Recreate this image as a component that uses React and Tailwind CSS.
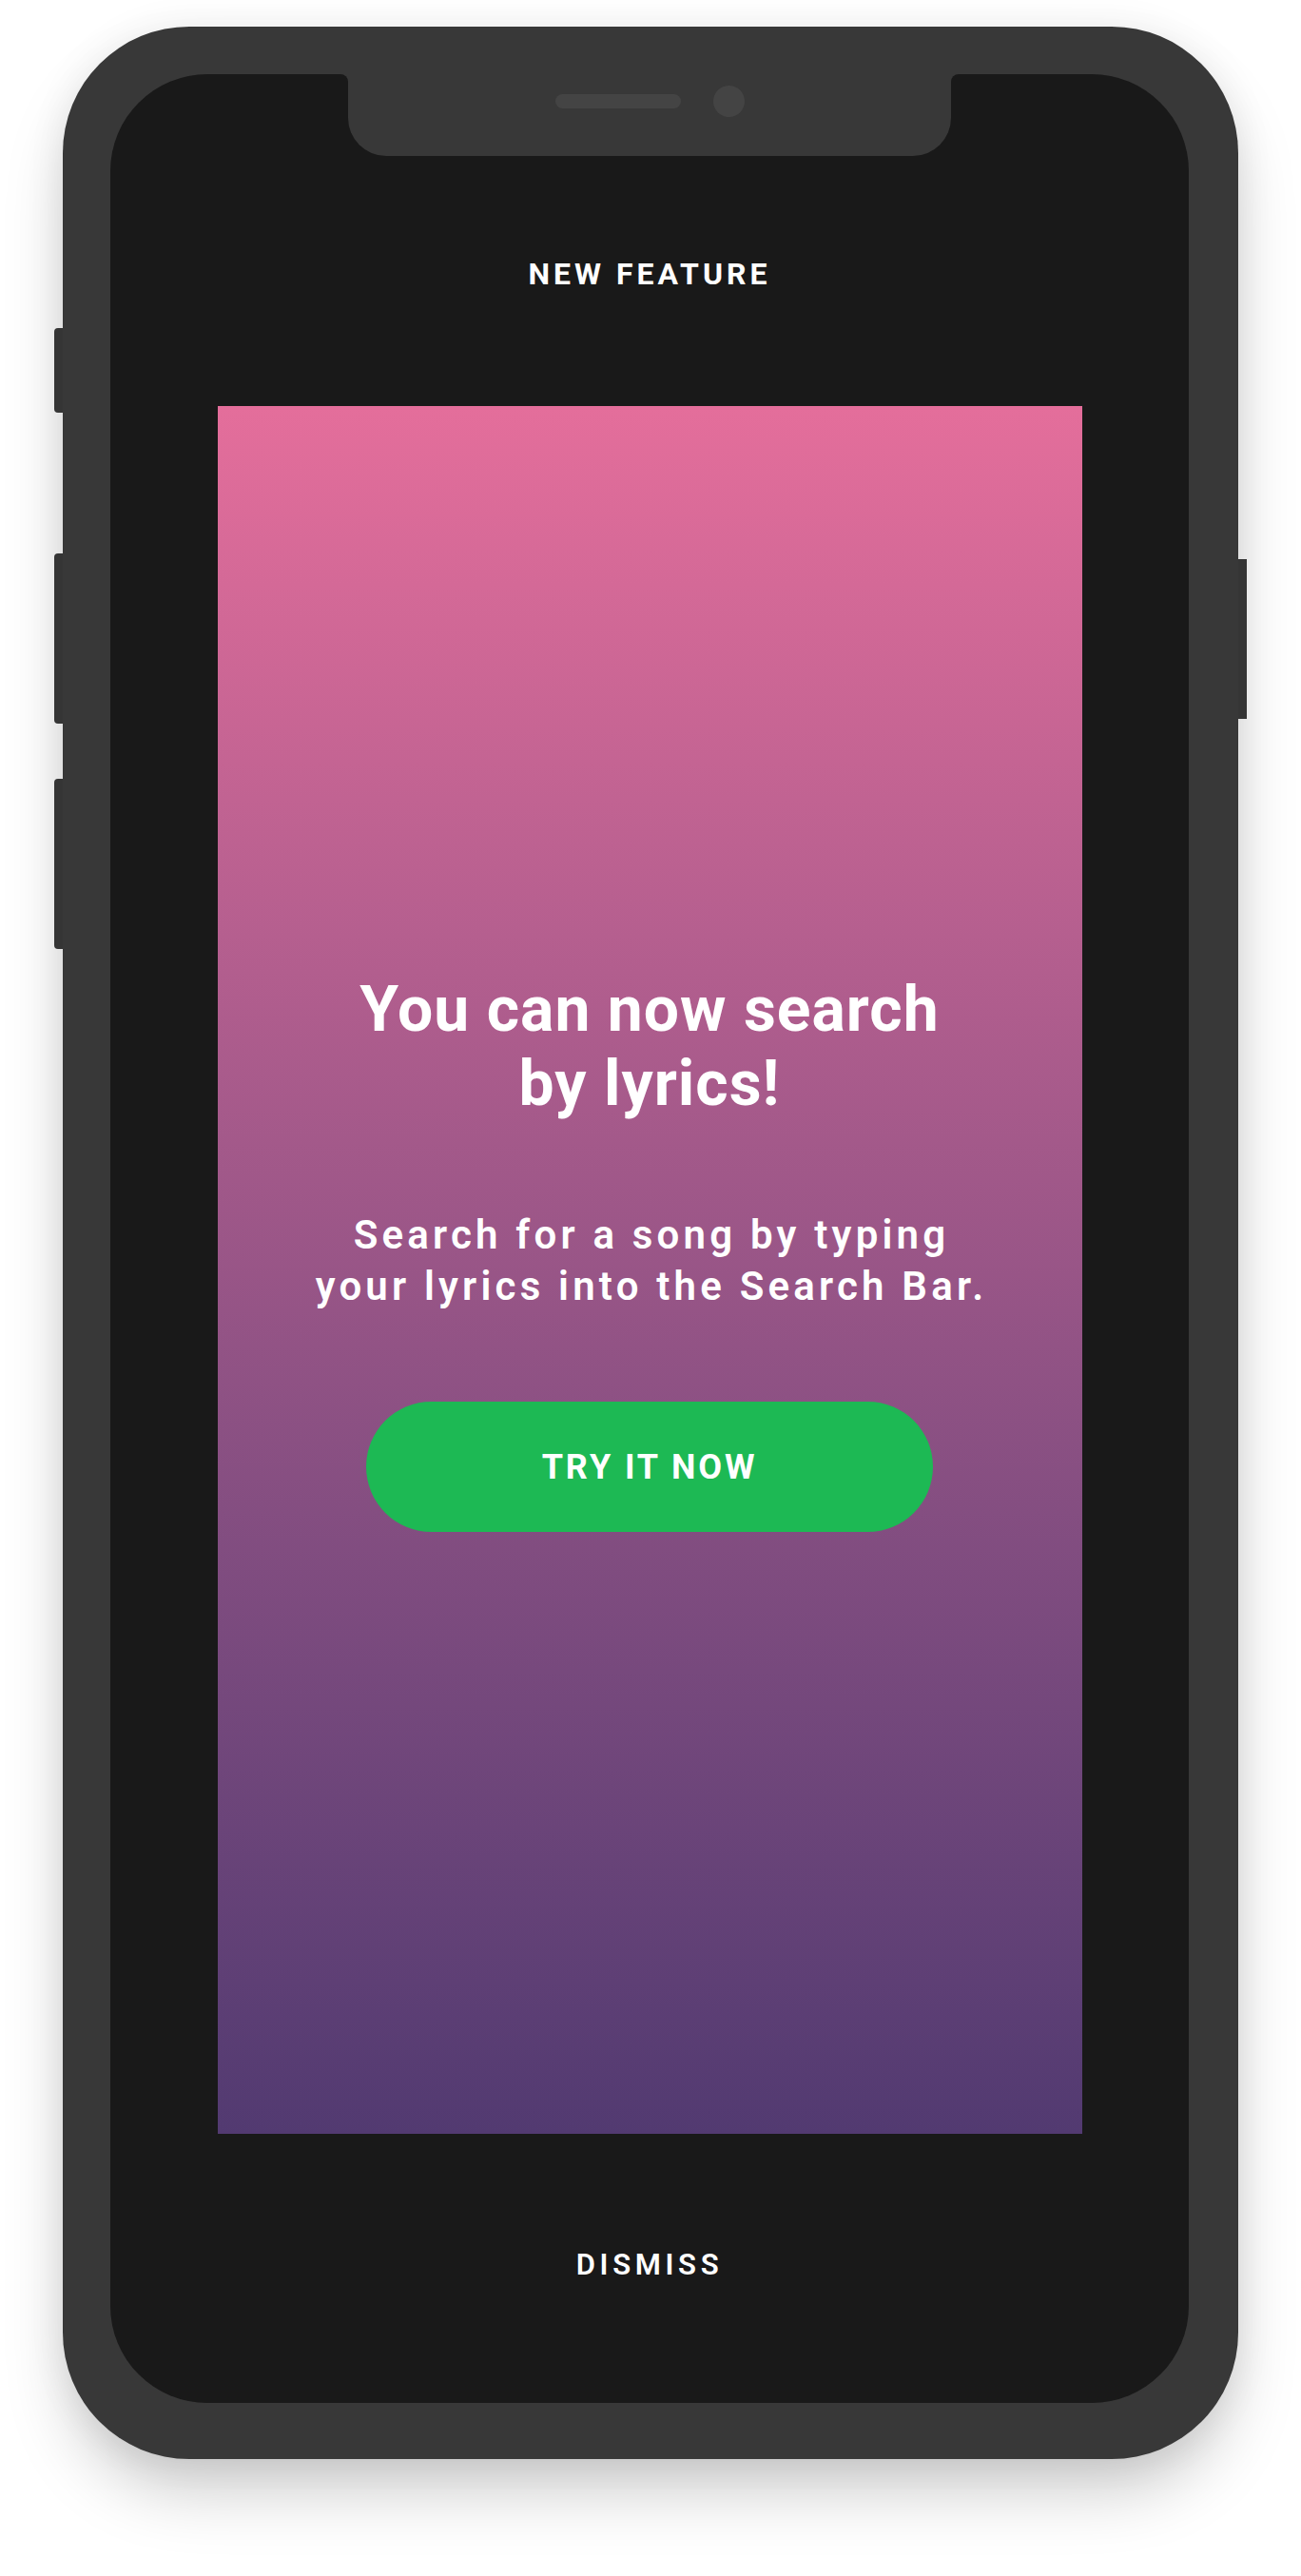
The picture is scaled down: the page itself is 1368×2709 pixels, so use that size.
import React from 'react';

const font = { fontFamily: 'Roboto, "Noto Sans", sans-serif' };

// small concave corner where the screen meets the notch
const NotchEar = ({ side }) => (
  <div className={`absolute top-0 h-2 w-2 bg-[#383838] ${side === 'left' ? '-left-2' : '-right-2'}`}>
    <div className={`h-full w-full bg-[#191919] ${side === 'left' ? 'rounded-tr-[8px]' : 'rounded-tl-[8px]'}`} />
  </div>
);

const Notch = () => (
  <div className="absolute left-1/2 top-0 h-[86px] w-[634px] -translate-x-1/2 rounded-b-[40px] bg-[#383838]">
    <NotchEar side="left" />
    <NotchEar side="right" />
    <div className="flex h-full items-start justify-center gap-[34px] pt-[12px]">
      <div className="mt-[9px] h-[15px] w-[132px] rounded-full bg-[#444444]" />
      <div className="h-[33px] w-[33px] rounded-full bg-[#444444]" />
    </div>
  </div>
);

const FeatureCard = () => (
  <div className="flex h-[1817px] w-[909px] flex-col items-center bg-linear-to-b from-[#e46e9b] to-[#523a71] pt-[596px] text-white">
    <h1 className="text-center text-[66px] font-bold leading-[78px] tracking-[1px]">
      You can now search
      <br />
      by lyrics!
    </h1>
    <p className="mt-[93px] pl-[4px] text-center text-[42px] font-semibold leading-[54px] tracking-[0.1em]">
      Search for a song by typing
      <br />
      your lyrics into the Search Bar.
    </p>
    <button className="mt-[94px] flex h-[137px] w-[596px] items-center justify-center rounded-full bg-[#1db954] text-[36px] font-bold tracking-[0.08em] text-white">
      TRY IT NOW
    </button>
  </div>
);

export default function App() {
  return (
    <div className="min-h-[2709px] w-full bg-white" style={font}>
      <div className="flex justify-center pt-[28px]">
        <div className="relative h-[2558px] w-[1236px] rounded-[133px] bg-[#383838] pl-[50px] pr-[52px] pt-[50px] pb-[59px] shadow-[0_40px_70px_-10px_rgba(0,0,0,0.22),0_0_40px_rgba(0,0,0,0.07)]">
          {/* side buttons */}
          <div className="absolute -left-[9px] top-[317px] h-[89px] w-[9px] rounded-l-[4px] bg-[#353535]" />
          <div className="absolute -left-[9px] top-[554px] h-[179px] w-[9px] rounded-l-[4px] bg-[#353535]" />
          <div className="absolute -left-[9px] top-[791px] h-[179px] w-[9px] rounded-l-[4px] bg-[#353535]" />
          <div className="absolute -right-[9px] top-[560px] h-[168px] w-[9px] bg-[#353535]" />

          <div className="relative flex h-full flex-col items-center rounded-[102px] bg-[#191919] pt-[190px]">
            <Notch />
            <div className="text-[32px] font-bold leading-[40px] tracking-[0.125em] text-white">NEW FEATURE</div>
            <div className="mt-[119px]">
              <FeatureCard />
            </div>
            <div className="mt-[118px] text-[31px] font-semibold leading-[40px] tracking-[0.15em] text-white">DISMISS</div>
          </div>
        </div>
      </div>
    </div>
  );
}
